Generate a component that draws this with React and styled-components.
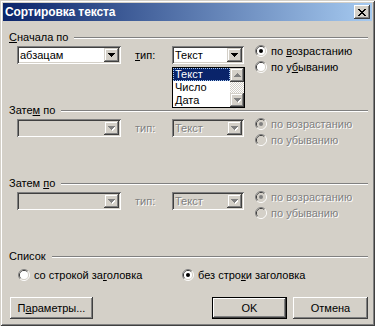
import React from 'react'
import styled, { createGlobalStyle } from 'styled-components'

const GlobalStyle = createGlobalStyle`
  html, body {
    margin: 0;
    padding: 0;
    background: #d4d0c8;
  }
  body {
    font-family: "Liberation Sans", Arial, sans-serif;
    font-size: 11px;
    color: #000;
  }
`;

const Window = styled.div`
  width: 375px;
  height: 326px;
  box-sizing: border-box;
  padding: 3px;
  background: #d4d0c8;
  box-shadow: inset 1px 1px #d4d0c8, inset -1px -1px #404040,
    inset 2px 2px #fff, inset -2px -2px #808080;
  display: flex;
  flex-direction: column;
`;

const TitleBar = styled.div`
  height: 18px;
  display: flex;
  align-items: center;
  padding: 0 2px;
  background: linear-gradient(to right, #0a246a, #a6caf0);
`;

const Title = styled.div`
  flex: 1;
  color: #fff;
  font-weight: bold;
  font-size: 12px;
  letter-spacing: -0.1px;
`;

const CloseButton = styled.div`
  width: 16px;
  height: 14px;
  box-sizing: border-box;
  background: #d4d0c8;
  box-shadow: inset -1px -1px #404040, inset 1px 1px #fff,
    inset -2px -2px #808080, inset 2px 2px #d4d0c8;
  display: flex;
  align-items: center;
  justify-content: center;
`;

const Body = styled.div`
  flex: 1;
  display: flex;
  flex-direction: column;
  padding: 10px 4px 0 6px;
`;

const Section = styled.div`
  height: ${p => p.$h}px;
  display: flex;
  flex-direction: column;
`;

const Header = styled.div`
  height: 13px;
  line-height: 13px;
  display: flex;
  align-items: center;
  gap: 6px;
`;

const Legend = styled.span`
  white-space: nowrap;
`;

const Etched = styled.div`
  flex: 1;
  height: 0;
  border-top: 1px solid #808080;
  border-bottom: 1px solid #fff;
`;

const Row = styled.div`
  display: flex;
  align-items: flex-start;
  margin-top: ${p => p.$top || 2}px;
  padding-left: ${p => p.$indent || 8}px;
`;

const Label = styled.span`
  width: ${p => p.$w}px;
  margin-left: ${p => p.$ml || 0}px;
  line-height: 18px;
  white-space: nowrap;
  color: ${p => (p.$disabled ? '#808080' : '#000')};
  text-shadow: ${p => (p.$disabled ? '1px 1px #fff' : 'none')};
`;

const ComboWrap = styled.div`
  position: relative;
`;

const Combo = styled.div`
  width: ${p => p.$w}px;
  height: 18px;
  box-sizing: border-box;
  padding: 2px;
  display: flex;
  align-items: center;
  background: ${p => (p.$disabled ? '#d4d0c8' : '#fff')};
  box-shadow: inset 1px 1px #808080, inset -1px -1px #fff,
    inset 2px 2px #404040, inset -2px -2px #d4d0c8;
`;

const ComboText = styled.span`
  flex: 1;
  padding-left: 1px;
  color: ${p => (p.$disabled ? '#808080' : '#000')};
  text-shadow: ${p => (p.$disabled ? '1px 1px #fff' : 'none')};
`;

const ArrowButton = styled.div`
  width: ${p => p.$w || 15}px;
  height: 14px;
  box-sizing: border-box;
  background: #d4d0c8;
  box-shadow: inset -1px -1px #404040, inset 1px 1px #d4d0c8,
    inset -2px -2px #808080, inset 2px 2px #fff;
  display: flex;
  align-items: center;
  justify-content: center;
`;

const DropList = styled.div`
  position: absolute;
  top: 21px;
  left: 0;
  width: 73px;
  height: 41px;
  box-sizing: border-box;
  border: 1px solid #000;
  background: #fff;
  display: flex;
  z-index: 2;
`;

const Items = styled.div`
  flex: 1;
  display: flex;
  flex-direction: column;
`;

const Item = styled.div`
  height: 13px;
  line-height: 13px;
  padding-left: 2px;
  background: ${p => (p.$selected ? '#0a246a' : 'transparent')};
  color: ${p => (p.$selected ? '#fff' : '#000')};
  outline: ${p => (p.$selected ? '1px dotted #a6caf0' : 'none')};
  outline-offset: -1px;
`;

const ScrollBar = styled.div`
  width: 14px;
  display: flex;
  flex-direction: column;
`;

const ScrollTrack = styled.div`
  flex: 1;
  background: repeating-conic-gradient(#fff 0 25%, #d4d0c8 0 50%) 0 0 / 2px 2px;
`;

const Radios = styled.div`
  display: flex;
  flex-direction: column;
  margin-left: ${p => p.$ml || 0}px;
  margin-top: -3px;
`;

const RadioLabel = styled.label`
  height: 16px;
  width: ${p => (p.$w ? `${p.$w}px` : 'auto')};
  display: flex;
  align-items: center;
  gap: 4px;
  white-space: nowrap;
  color: ${p => (p.$disabled ? '#808080' : '#000')};
  text-shadow: ${p => (p.$disabled ? '1px 1px #fff' : 'none')};
`;

const ButtonRow = styled.div`
  display: flex;
  align-items: center;
  gap: 6px;
  margin-top: 1px;
  padding-left: 1px;
`;

const Spacer = styled.div`
  flex: 1;
`;

const Button = styled.div`
  width: ${p => p.$w}px;
  height: 22px;
  box-sizing: border-box;
  background: #d4d0c8;
  display: flex;
  align-items: center;
  justify-content: center;
  box-shadow: ${p =>
    p.$default
      ? 'inset 0 0 0 1px #000, inset -2px -2px #404040, inset 2px 2px #fff, inset -3px -3px #808080'
      : 'inset -1px -1px #404040, inset 1px 1px #fff, inset -2px -2px #808080, inset 2px 2px #d4d0c8'};
`;

const Arrow = ({ up, disabled }) => (
  <svg width="7" height="5" viewBox="0 0 7 5">
    {disabled && (
      <path d={up ? 'M4 1h1v1h1v1h1v1H1V3h1V2h1V1z' : 'M1 1h7v1H7v1H6v1H5v1H4V4H3V3H2V2H1z'} fill="#fff" />
    )}
    <path
      d={up ? 'M3 0h1v1h1v1h1v1h1v1H0V3h1V2h1V1h1z' : 'M0 0h7v1H6v1H5v1H4v1H3V3H2V2H1V1H0z'}
      fill={disabled ? '#808080' : '#000'}
    />
  </svg>
);

const Radio = ({ checked, disabled }) => (
  <svg width="12" height="12" viewBox="0 0 12 12">
    <path d="M2.11 9.89A5.5 5.5 0 0 1 9.89 2.11" fill="none" stroke="#808080" />
    <path d="M9.89 2.11A5.5 5.5 0 0 1 2.11 9.89" fill="none" stroke="#fff" />
    <path d="M2.82 9.18A4.5 4.5 0 0 1 9.18 2.82" fill="none" stroke="#404040" />
    <path d="M9.18 2.82A4.5 4.5 0 0 1 2.82 9.18" fill="none" stroke="#d4d0c8" />
    <circle cx="6" cy="6" r="4" fill={disabled ? '#d4d0c8' : '#fff'} />
    {checked && <circle cx="6" cy="6" r="2" fill={disabled ? '#808080' : '#000'} />}
  </svg>
);

const ComboBox = ({ width, value, disabled, open }) => (
  <ComboWrap>
    <Combo $w={width} $disabled={disabled}>
      <ComboText $disabled={disabled}>{value}</ComboText>
      <ArrowButton>
        <Arrow disabled={disabled} />
      </ArrowButton>
    </Combo>
    {open && (
      <DropList>
        <Items>
          <Item $selected>Текст</Item>
          <Item>Число</Item>
          <Item>Дата</Item>
        </Items>
        <ScrollBar>
          <ArrowButton $w={14}>
            <Arrow up disabled />
          </ArrowButton>
          <ScrollTrack />
          <ArrowButton $w={14}>
            <Arrow disabled />
          </ArrowButton>
        </ScrollBar>
      </DropList>
    )}
  </ComboWrap>
);

const SortSection = ({ legend, field, disabled, open }) => (
  <Section $h={73}>
    <Header>
      <Legend>{legend}</Legend>
      <Etched />
    </Header>
    <Row>
      <ComboBox width={104} value={field} disabled={disabled} />
      <Label $w={37} $ml={14} $disabled={disabled}>
        {disabled ? 'тип:' : <><u>т</u>ип:</>}
      </Label>
      <ComboBox width={72} value="Текст" disabled={disabled} open={open} />
      <Radios $ml={11}>
        <RadioLabel $disabled={disabled}>
          <Radio checked disabled={disabled} />
          {disabled ? 'по возрастанию' : <span>по <u>в</u>озрастанию</span>}
        </RadioLabel>
        <RadioLabel $disabled={disabled}>
          <Radio disabled={disabled} />
          {disabled ? 'по убыванию' : <span>по у<u>б</u>ыванию</span>}
        </RadioLabel>
      </Radios>
    </Row>
  </Section>
);

export default function App() {
  return (
    <>
      <GlobalStyle />
      <Window>
        <TitleBar>
          <Title>Сортировка текста</Title>
          <CloseButton>
            <svg width="8" height="7" viewBox="0 0 8 7">
              <path
                d="M0 0h2v1h1v1h2V1h1V0h2v1H7v1H6v1H5v1h1v1h1v1h1v1H6V6H5V5H3v1H2v1H0V6h1V5h1V4h1V3H2V2H1V1H0z"
                fill="#000"
              />
            </svg>
          </CloseButton>
        </TitleBar>
        <Body>
          <SortSection legend={<><u>С</u>начала по</>} field="абзацам" open />
          <SortSection legend={<>Зате<u>м</u> по</>} field="" disabled />
          <SortSection legend={<>Затем <u>п</u>о</>} field="" disabled />
          <Section $h={46}>
            <Header>
              <Legend>Список</Legend>
              <Etched />
            </Header>
            <Row $top={4} $indent={9}>
              <RadioLabel $w={164}>
                <Radio />
                <span>со строкой за<u>г</u>оловка</span>
              </RadioLabel>
              <RadioLabel>
                <Radio checked />
                <span>без стро<u>к</u>и заголовка</span>
              </RadioLabel>
            </Row>
          </Section>
          <ButtonRow>
            <Button $w={83}>
              <span>П<u>а</u>раметры...</span>
            </Button>
            <Spacer />
            <Button $w={75} $default>OK</Button>
            <Button $w={75}>Отмена</Button>
          </ButtonRow>
        </Body>
      </Window>
    </>
  );
}
